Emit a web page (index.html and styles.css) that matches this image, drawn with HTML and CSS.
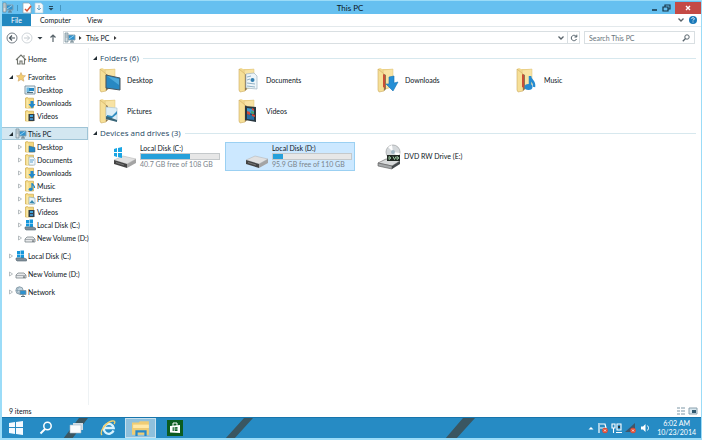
FILE: index.html
```html
<!DOCTYPE html>
<html lang="en">
<head>
<meta charset="utf-8">
<title>This PC</title>
<link rel="stylesheet" href="styles.css">
</head>
<body>
<svg class="sprite" aria-hidden="true">
  <symbol id="pc" viewBox="0 0 12 12"><path d="M1 1h3v9H1z" fill="#d4dde2" stroke="#6f8793" stroke-width=".7"/><path d="M1.500 3h2M1.500 5h2" stroke="#6f8793" stroke-width=".6"/><path d="M4.500 3h6.500v5H4.500z" fill="#2f93d0" stroke="#8aa0ac" stroke-width=".9"/><path d="M5 7l5-3.500" stroke="#8fd0f2"/><path d="M6 10h4M8 8v2" stroke="#607884"/></symbol>
  <symbol id="house" viewBox="0 0 12 12"><path d="M1 7l5-5 5 5M2.500 6v5h2.500V8h2v3h2.500V6" fill="#fff" stroke="#71746d" stroke-width="1.100"/><path d="M9 2v2" stroke="#71746d"/></symbol>
  <symbol id="star" viewBox="0 0 12 12"><path d="M6 1.500l1.300 3 3.200.3-2.400 2.200.8 3.200L6 8.500l-2.900 1.700.8-3.200-2.400-2.200 3.200-.3z" fill="#f3cd72" stroke="#cfa566" stroke-width=".6"/></symbol>
  <symbol id="desk" viewBox="0 0 12 12"><path d="M1 2h10v8H1z" fill="#e5f2fa" stroke="#8197a4"/><path d="M2.500 3.500h3v5h-3z" fill="#6fb8df"/><path d="M5 4h5v3H5z" fill="#2489c5"/><path d="M3 8.500h6" stroke="#51707f"/></symbol>
  <symbol id="fold" viewBox="0 0 12 12"><path d="M1.500 1l2-.6 1 .8h5V11h-8z" fill="#f3d77f" stroke="#cfaa4e" stroke-width=".7"/><path d="M2.500 2l2 1v9l-2-1z" fill="#fae9a9"/></symbol>
  <symbol id="f-desk" viewBox="0 0 12 12"><use href="#fold"/><path d="M5 5l6 1.500V11H5z" fill="#2487c5" stroke="#47606e" stroke-width=".5"/></symbol>
  <symbol id="f-doc" viewBox="0 0 12 12"><use href="#fold"/><path d="M5 3h4l2 2v6H5z" fill="#f3f8fb" stroke="#8ba9b9" stroke-width=".6"/><path d="M6 6h4M6 8h3" stroke="#338bc3" stroke-width=".8"/></symbol>
  <symbol id="f-down" viewBox="0 0 12 12"><use href="#fold"/><path d="M6.500 4h3v3h2L8 11.500 4.500 7h2z" fill="#2288cb"/></symbol>
  <symbol id="f-music" viewBox="0 0 12 12"><use href="#fold"/><path d="M8 9V3c0 2 3 2 2.500 5" fill="none" stroke="#2288cb" stroke-width="1.300"/><ellipse cx="6.700" cy="9.300" rx="2" ry="1.600" fill="#2288cb"/></symbol>
  <symbol id="f-pic" viewBox="0 0 12 12"><use href="#fold"/><path d="M5 4l6 1v6H5z" fill="#e8f4fa" stroke="#86a6b5" stroke-width=".6"/><path d="M5.500 10l2.500-3 3 3.500z" fill="#3587ae"/></symbol>
  <symbol id="f-vid" viewBox="0 0 12 12"><use href="#fold"/><path d="M4.500 4h6v7h-6z" fill="#303e49"/><path d="M6 5h3v2H6z" fill="#3fa4dc"/><path d="M6 8h3v2H6z" fill="#418bc0"/></symbol>
  <symbol id="osdisk" viewBox="0 0 12 12"><path d="M2 1h3v3H2zM5.500 .5H9V4H5.500zM2 4.500h3v3H2zM5.500 4.500H9V8H5.500z" fill="#1597dc"/><path d="M1 8h8l2.500 1v2H2L1 10z" fill="#82909a" stroke="#526572" stroke-width=".6"/></symbol>
  <symbol id="disk" viewBox="0 0 12 12"><path d="M1 7l2-2h6l2 2v3H1z" fill="#e6e8ea" stroke="#7c858b" stroke-width=".8"/><path d="M1 7.500h10" stroke="#8c949a" stroke-width=".7"/><path d="M8 9h2" stroke="#2d3940" stroke-width=".8"/></symbol>
  <symbol id="net" viewBox="0 0 12 12"><circle cx="4.500" cy="4.500" r="3.700" fill="#c4d5df" stroke="#758b98" stroke-width=".7"/><path d="M1 4.500h7M4.500 1c-3 2-3 5 0 7" fill="none" stroke="#7693a4" stroke-width=".6"/><path d="M5 4.500h6v4H5z" fill="#2e91ce" stroke="#78909d" stroke-width=".8"/><path d="M6 10.500h4M8 8.500v2" stroke="#5f7580"/></symbol>
  <symbol id="open" viewBox="0 0 6 6"><path d="M5 1v4H1z" fill="#222d33"/></symbol>
  <symbol id="shut" viewBox="0 0 6 6"><path d="M1.500 1l3 2-3 2z" fill="#fff" stroke="#9ba3a8" stroke-width=".7"/></symbol>
  <symbol id="down" viewBox="0 0 8 8"><path d="M1.500 2.500L4 5l2.500-2.500" fill="none" stroke="#59636a" stroke-width="1.300"/></symbol>
  <symbol id="big" viewBox="0 0 24 26"><path d="M1 2l2-1 2 1h11v18l-9 3-6 1z" fill="#f1d88f"/><path d="M6 3l10-1v17l-8 3z" fill="#f8e3a4" stroke="#dcc078" stroke-width=".5"/><path d="M1 2l6 5v17l-5 1-1-2z" fill="#f6df97" stroke="#cdab62" stroke-width=".6"/><path d="M7 7l2 1v14l-2 2z" fill="#8e7550"/></symbol>
  <symbol id="hdd" viewBox="0 0 24 26"><path d="M1 16l9-4 13 3-9 5z" fill="#e1e1e1" stroke="#b0b0b0" stroke-width=".5"/><path d="M1 16l13 4v4L1 20z" fill="#444"/><path d="M14 20l9-5v4l-9 5z" fill="#a4a4a4"/><path d="M3 18.500l8 2.500" stroke="#777"/></symbol>
</svg>
<div class="window">
  <header class="title">
    <svg class="i12"><use href="#pc"/></svg><span class="bar"></span>
    <button aria-label="Properties"><svg class="i12" viewBox="0 0 12 12"><path d="M2 1h6l2 2v8H2z" fill="#fff" stroke="#8ba0ad" stroke-width=".7"/><path d="M4 7l2 2 4-5" fill="none" stroke="#d45335" stroke-width="1.500"/></svg></button>
    <button aria-label="New folder"><svg class="i12" viewBox="0 0 12 12"><path d="M2 1h6l2 2v8H2z" fill="#f4fafd" stroke="#b2ccda" stroke-width=".7"/><path d="M6 3v5M4 6l2 2 2-2" fill="none" stroke="#6fa6c7"/></svg></button>
    <button aria-label="Customize toolbar"><svg class="i8" viewBox="0 0 8 8"><path d="M2 2h4v1H2zM1.500 4h5L4 6.500z" fill="#22475c"/></svg></button><span class="bar"></span>
    <h1>This PC</h1>
    <button aria-label="Minimize"><svg class="i12" viewBox="0 0 12 12"><path d="M4 8h5" stroke="#163447" stroke-width="1.500"/></svg></button>
    <button aria-label="Restore"><svg class="i12" viewBox="0 0 12 12"><path d="M5 5V3h5v4H8M3 5h5v4H3z" fill="none" stroke="#163447" stroke-width="1.200"/></svg></button>
    <button class="close" aria-label="Close"><svg class="i8" viewBox="0 0 8 8"><path d="M2 2l4 4M6 2L2 6" stroke="#fff" stroke-width="1.400"/></svg></button>
  </header>
  <nav class="tabs">
    <button class="file">File</button><button>Computer</button><button>View</button>
    <span class="grow"></span>
    <button aria-label="Expand ribbon"><svg class="i8"><use href="#down"/></svg></button>
    <button aria-label="Help"><svg class="i8" viewBox="0 0 8 8"><circle cx="4" cy="4" r="4" fill="#1878b8"/><path d="M2.700 3c0-2 3-1.500 2.600 0L4 4.500M4 5.500v1" fill="none" stroke="#fff" stroke-width=".9"/></svg></button>
  </nav>
  <div class="address">
    <button aria-label="Back"><svg class="i12" viewBox="0 0 12 12"><circle cx="6" cy="6" r="5" fill="#fff" stroke="#68727a" stroke-width=".9"/><path d="M9 6H3.500M6 3.500L3.500 6 6 8.500" fill="none" stroke="#46525a" stroke-width="1.200"/></svg></button>
    <button aria-label="Forward"><svg class="i12" viewBox="0 0 12 12"><circle cx="6" cy="6" r="5" fill="#fff" stroke="#c3cacf" stroke-width=".8"/><path d="M3 6h5.500M6 3.500L8.500 6 6 8.500" fill="none" stroke="#c3cacf"/></svg></button>
    <button aria-label="Recent"><svg class="i8" viewBox="0 0 8 8"><path d="M1.500 3h5L4 5.500z" fill="#333d44"/></svg></button>
    <button aria-label="Up"><svg class="i12" viewBox="0 0 12 12"><path d="M6 10V3M3.500 5.500L6 3l2.500 2.500" fill="none" stroke="#59646b" stroke-width="1.200"/></svg></button>
    <div class="crumbs">
      <svg class="i12"><use href="#pc"/></svg><svg class="i8" viewBox="0 0 8 8"><path d="M3 2l2.500 2L3 6z" fill="#333"/></svg>
      <a href="#pc">This PC</a><svg class="i8" viewBox="0 0 8 8"><path d="M3 2l2.500 2L3 6z" fill="#333"/></svg>
      <span class="grow"></span>
      <button aria-label="Previous locations"><svg class="i8"><use href="#down"/></svg></button>
      <button class="reload" aria-label="Refresh"><svg class="i8" viewBox="0 0 8 8"><path d="M6.500 3A2.700 2.700 0 1 0 6.500 5M4.500 3h2.300V.7" fill="none" stroke="#526069"/></svg></button>
    </div>
    <label class="search"><input type="text" aria-label="Search This PC" placeholder="Search This PC"><svg class="i8" viewBox="0 0 8 8"><circle cx="5" cy="3" r="2.200" fill="none" stroke="#59656d"/><path d="M3.500 4.500L.8 7.200" stroke="#59656d" stroke-width="1.300"/></svg></label>
  </div>
  <div class="body">
    <nav class="tree">
      <div class="branch"><a href="#h"><i class="tw"></i><svg class="i12"><use href="#house"/></svg>Home</a></div>
      <div class="branch">
        <a href="#f"><svg class="tw"><use href="#open"/></svg><svg class="i12"><use href="#star"/></svg>Favorites</a>
        <a class="sub" href="#d"><i class="tw"></i><svg class="i12"><use href="#desk"/></svg>Desktop</a>
        <a class="sub" href="#d"><i class="tw"></i><svg class="i12"><use href="#f-down"/></svg>Downloads</a>
        <a class="sub" href="#d"><i class="tw"></i><svg class="i12"><use href="#f-vid"/></svg>Videos</a>
      </div>
      <div class="branch">
        <a class="current" href="#p"><svg class="tw"><use href="#open"/></svg><svg class="i12"><use href="#pc"/></svg>This PC</a>
        <a class="sub" href="#d"><svg class="tw"><use href="#shut"/></svg><svg class="i12"><use href="#f-desk"/></svg>Desktop</a>
        <a class="sub" href="#d"><svg class="tw"><use href="#shut"/></svg><svg class="i12"><use href="#f-doc"/></svg>Documents</a>
        <a class="sub" href="#d"><svg class="tw"><use href="#shut"/></svg><svg class="i12"><use href="#f-down"/></svg>Downloads</a>
        <a class="sub" href="#d"><svg class="tw"><use href="#shut"/></svg><svg class="i12"><use href="#f-music"/></svg>Music</a>
        <a class="sub" href="#d"><svg class="tw"><use href="#shut"/></svg><svg class="i12"><use href="#f-pic"/></svg>Pictures</a>
        <a class="sub" href="#d"><svg class="tw"><use href="#shut"/></svg><svg class="i12"><use href="#f-vid"/></svg>Videos</a>
        <a class="sub" href="#d"><svg class="tw"><use href="#shut"/></svg><svg class="i12"><use href="#osdisk"/></svg>Local Disk (C:)</a>
        <a class="sub" href="#d"><svg class="tw"><use href="#shut"/></svg><svg class="i12"><use href="#disk"/></svg>New Volume (D:)</a>
      </div>
      <div class="branch"><a href="#c"><svg class="tw"><use href="#shut"/></svg><svg class="i12"><use href="#osdisk"/></svg>Local Disk (C:)</a></div>
      <div class="branch"><a href="#v"><svg class="tw"><use href="#shut"/></svg><svg class="i12"><use href="#disk"/></svg>New Volume (D:)</a></div>
      <div class="branch"><a href="#n"><svg class="tw"><use href="#shut"/></svg><svg class="i12"><use href="#net"/></svg>Network</a></div>
    </nav>
    <main>
      <section>
        <h2><svg class="tw"><use href="#open"/></svg>Folders (6)</h2>
        <div class="folders">
          <a href="#1"><svg class="i24" viewBox="0 0 24 26"><use href="#big"/><path d="M7 8l14 3v12L7 21z" fill="#2888c2" stroke="#485761"/><path d="M8 9l12 9v-6z" fill="#4ca9db"/></svg>Desktop</a>
          <a href="#2"><svg class="i24" viewBox="0 0 24 26"><use href="#big"/><path d="M8 7l8-1 3 3v13L8 21z" fill="#eef5f9" stroke="#9fb4c1" stroke-width=".7"/><path d="M9 10l4-1M9 13l3-1M9 16l8 1M9 19l8 1" stroke="#92b2c6"/><circle cx="14.500" cy="13" r="2" fill="#3480b1"/></svg>Documents</a>
          <a href="#3"><svg class="i24" viewBox="0 0 24 26"><use href="#big"/><path d="M6 7l2 1v13l-2-1z" fill="#c94d36"/><path d="M12 10l5-1v7l4-1-5 9-7-7h3z" fill="#268fd5" stroke="#1672b3" stroke-width=".6"/></svg>Downloads</a>
          <a href="#4"><svg class="i24" viewBox="0 0 24 26"><use href="#big"/><path d="M6 7l2 1v13l-2-1z" fill="#c94d36"/><path d="M14 21V9c0 5 5 4 4 11" fill="none" stroke="#258bd0" stroke-width="2.500"/><ellipse cx="12.500" cy="20" rx="4" ry="3" fill="#258bd0"/></svg>Music</a>
          <a href="#5"><svg class="i24" viewBox="0 0 24 26"><use href="#big"/><path d="M7 9l11 1v13L7 21z" fill="#dceef7" stroke="#b0c7d2" stroke-width=".7"/><path d="M8 17l5 1 5-5v3l-5 4-5 1z" fill="#318dc0"/><path d="M7 18l11 4v2L7 21z" fill="#396577"/></svg>Pictures</a>
          <a href="#6"><svg class="i24" viewBox="0 0 24 26"><use href="#big"/><path d="M7 8l11 1v15L7 22z" fill="#293740"/><path d="M9 10l7 1v5l-7-1z" fill="#3c9bcf"/><path d="M9 16l7 1v5l-7-1z" fill="#276fa4"/><path d="M9 13l3 1v3l-3-1zM14 16l3 1v2l-3-1zM14 10l2 1v2l-2-1z" fill="#d24836"/><path d="M13 13l3 1v2l-3-1z" fill="#49a165"/></svg>Videos</a>
        </div>
      </section>
      <section>
        <h2><svg class="tw"><use href="#open"/></svg>Devices and drives (3)</h2>
        <div class="drives">
          <a href="#c"><svg class="i24" viewBox="0 0 24 26"><use href="#hdd"/><path d="M1 5l3-1v4H1zM5 4l4-1v5H5zM1 9h3v4l-3-1zM5 9h4v5l-4-1z" fill="#19a5e4"/></svg><span class="info">Local Disk (C:)<progress value="63" max="100"></progress><small>40.7 GB free of 108 GB</small></span></a>
          <a class="picked" href="#d"><svg class="i24" viewBox="0 0 24 26"><use href="#hdd"/></svg><span class="info">Local Disk (D:)<progress value="13" max="100"></progress><small>95.9 GB free of 110 GB</small></span></a>
          <a href="#e"><svg class="i24" viewBox="0 0 24 26"><path d="M1 19l8-4 14 2-8 5z" fill="#d8dadb" stroke="#777" stroke-width=".7"/><path d="M1 19l14 3v3L1 22z" fill="#a5a8aa" stroke="#555" stroke-width=".6"/><path d="M15 22l8-5v3l-8 5z" fill="#44494c"/><circle cx="16" cy="8" r="7" fill="#d5d9dc" stroke="#9c9fa1" stroke-width=".7"/><path d="M16 8l-5-5 4-2zM16 8l5 5 2-4z" fill="#fff"/><circle cx="16" cy="8" r="2" fill="#a1b8c5"/><path d="M10 11h13v6H10z" fill="#202822"/><path d="M12 12.500v3l2-1.500zM16 12.500l1.500 3 1.500-3M20 12.500v3l2-1.500z" fill="none" stroke="#9bc4a0"/></svg><span class="info">DVD RW Drive (E:)</span></a>
        </div>
      </section>
    </main>
  </div>
  <footer class="status"><span>9 items</span><span class="grow"></span>
    <button aria-label="Details view"><svg class="i12" viewBox="0 0 12 12"><path d="M2 3h3M2 6h3M2 9h3M6 3h4M6 6h4M6 9h4" stroke="#7d96a5"/></svg></button>
    <button aria-label="Icons view"><svg class="i12" viewBox="0 0 12 12"><path d="M2 3h8v6H2z" fill="#d9e8f0" stroke="#8ba1ae"/><path d="M5 5h4v3H5z" fill="#31596f"/></svg></button>
  </footer>
</div>
<div class="taskbar">
  <svg class="stripes" width="480" height="21" viewBox="0 0 480 21" aria-hidden="true"><path d="M61 21L77 0h9L70 21zM223 21L242 0h9L232 21zM443 21L461 0h12L454 21z" fill="#3a5661"/></svg>
  <button aria-label="Start"><svg class="i16" viewBox="0 0 16 16"><path d="M1 3l6-1v5H1zM8 2l7-1v6H8zM1 8h6v6l-6-1zM8 8h7v7l-7-1z" fill="#f4faff"/></svg></button>
  <button aria-label="Search"><svg class="i16" viewBox="0 0 16 16"><circle cx="9.500" cy="6" r="3.700" fill="none" stroke="#fff" stroke-width="1.500"/><path d="M7 9l-4.500 4.500" stroke="#fff" stroke-width="2"/></svg></button>
  <button aria-label="Task view"><svg class="i16" viewBox="0 0 16 16"><path d="M4 3h10v7H4z" fill="#d2dde5"/><path d="M1 5h11v8H1z" fill="#f9fbfc" stroke="#a5bac7" stroke-width=".6"/></svg></button>
  <button aria-label="Internet Explorer"><svg class="i16" viewBox="0 0 16 16"><path d="M13.500 10.500A5 5 0 1 1 13.700 8H5" fill="none" stroke="#d8f3ff" stroke-width="2.300"/><path d="M2 15C-1 12 6 2 12 1c3-.5 3.500 1 2 3" fill="none" stroke="#f5cf68" stroke-width="1.300"/></svg></button>
  <button class="active" aria-label="File Explorer"><svg class="i18" viewBox="0 0 16 16"><path d="M0 3h6l1-1h8v12H0z" fill="#efcc74"/><path d="M1 5h14v3H1z" fill="#ffe9a8"/><path d="M3 15v-5h10v5h-2v-3H5v3z" fill="#2688cb"/></svg></button>
  <button aria-label="Store"><svg class="i16" viewBox="0 0 16 16"><path d="M0 0h16v16H0z" fill="#0b5c20"/><path d="M3 6l10-1v8L3 12.500z" fill="#fff"/><path d="M6 6V3h4v3" fill="none" stroke="#fff"/><path d="M5.500 7.500l2-.2v1.500h-2zM8 7.200l2.500-.2v1.800H8zM5.500 9.300h2v1.500l-2-.1zM8 9.300h2.500v1.800L8 11z" fill="#0b5c20"/></svg></button>
  <span class="grow"></span>
  <div class="tray">
    <svg class="i8" viewBox="0 0 8 8"><path d="M1.500 5.500L4 3l2.500 2.500z" fill="#fff"/></svg>
    <svg class="i12" viewBox="0 0 12 12"><path d="M2 11V1M3 2h5l1 4H3" fill="none" stroke="#fff" stroke-width="1.200"/><circle cx="8" cy="8.500" r="2.800" fill="#e04b35"/><path d="M7 7.500l2 2m0-2l-2 2" stroke="#fff" stroke-width=".8"/></svg>
    <svg class="i12" viewBox="0 0 12 12"><path d="M1 2h3v4H1zM2.500 6v5M6 2h4v6H6zM5 10.500h6" fill="none" stroke="#fff" stroke-width="1.100"/><path d="M7 4h2v2H7z" fill="#263a45"/></svg>
    <svg class="i12" viewBox="0 0 12 12"><path d="M0 10L10 1v9z" fill="#40566a"/><circle cx="8" cy="8.500" r="2.800" fill="#e04b35"/><path d="M7 7.500l2 2m0-2l-2 2" stroke="#fff" stroke-width=".8"/></svg>
    <svg class="i12" viewBox="0 0 12 12"><path d="M2 4.500h2L6.500 2v8L4 7.500H2z" fill="#fff"/><path d="M8 3.500c2 1 2 4 0 5" fill="none" stroke="#fff"/></svg>
  </div>
  <time>6:02 AM<br>10/23/2014</time>
</div>
</body>
</html>
```
FILE: styles.css
```css
* { box-sizing: border-box; }
body {
  margin: 0;
  min-height: 100vh;
  display: flex;
  flex-direction: column;
  background: #fff;
  border: solid #9bdcf8;
  border-width: 1px 1px 2px 2px;
  font: 7px/10px Lato, "Open Sans", sans-serif;
  color: #0c161c;
}
button {
  display: flex;
  align-items: center;
  justify-content: center;
  padding: 0;
  border: 0;
  background: none;
  font: inherit;
  color: inherit;
}
a { color: inherit; text-decoration: none; white-space: nowrap; }
svg { display: block; flex: none; }
.sprite { position: absolute; width: 0; height: 0; }
.i8 { width: 8px; height: 8px; }
.i12 { width: 12px; height: 12px; }
.i16 { width: 16px; height: 16px; }
.i18 { width: 18px; height: 18px; }
.i24 { width: 24px; height: 26px; }
.tw { width: 6px; height: 6px; flex: none; }
.grow { flex: 1; }
.window { flex: 1; display: flex; flex-direction: column; }

.title { display: flex; align-items: center; height: 13px; background: #66c0f0; }
.title > button { height: 12px; min-width: 12px; }
.title .bar { width: 1px; height: 6px; margin: 0 3px; background: #4697c2; }
.title h1 { flex: 1; margin: 0; padding-right: 12px; font: 8px/12px Lato, "Open Sans", sans-serif; text-align: center; }
.title .close { width: 26px; margin-left: 3px; background: #c44a45; }

.tabs { display: flex; height: 13px; border-bottom: 1px solid #e3e9ec; padding-right: 2px; }
.tabs > button { min-width: 12px; }
.tabs .file { width: 29px; margin-right: 9px; background: #2088c0; color: #fff; }
.tabs .file + button { margin-right: 16px; }

.address { display: flex; align-items: center; gap: 4px; height: 21px; padding: 0 6px 0 4px; }
.address > button + button { margin-left: -1px; }
.crumbs {
  flex: 1;
  display: flex;
  align-items: center;
  height: 13px;
  border: 1px solid #d9dfe2;
}
.crumbs a { padding: 0 2px; }
.crumbs button { width: 12px; height: 12px; }
.crumbs .reload { border-left: 1px solid #d9dfe2; }
.search { display: flex; align-items: center; width: 111px; height: 13px; padding: 0 4px; border: 1px solid #d9dfe2; }
.search input { flex: 1; min-width: 0; padding: 0; border: 0; outline: 0; background: none; font: inherit; }
.search input::placeholder { color: #68747b; }

.body { flex: 1; display: flex; }
.tree { width: 87px; padding-top: 4px; border-right: 1px solid #eef2f4; display: flex; flex-direction: column; gap: 5px; }
.tree a { display: flex; align-items: center; height: 13px; padding-left: 6px; gap: 1px; }
.tree .sub { padding-left: 15px; }
.tree .current { background: #d3e7f1; border: 1px solid #9fc4d6; border-left: 0; }

main { flex: 1; padding: 4px 5px 0 3px; }
h2 { display: flex; align-items: center; gap: 2px; height: 12px; margin: 0; font: 8px/12px "Open Sans", sans-serif; color: #1d4864; white-space: nowrap; }
h2::after { content: ""; flex: 1; height: 1px; margin-left: 2px; background: #d7e8ee; }
.folders { display: grid; grid-template-columns: repeat(auto-fill, 139px); gap: 5px 0; padding: 3px 0 3px 7px; }
.folders a { display: flex; align-items: center; gap: 4px; }
.drives { display: flex; flex-wrap: wrap; gap: 2px; padding: 3px 0 0 1px; }
.drives a { display: flex; align-items: center; gap: 3px; width: 130px; height: 29px; padding: 0 2px 0 19px; border: 1px solid transparent; }
.drives .picked { background: #cce8ff; border-color: #9bd0f2; }
.info { flex: 1; display: flex; flex-direction: column; line-height: 9px; }
small { font-size: 7px; color: #7a838a; }
progress { appearance: none; display: block; width: 100%; height: 7px; border: 1px solid #c5c9cb; background: #e7e7e7; }
progress::-webkit-progress-bar { background: #e7e7e7; }
progress::-webkit-progress-value { background: #26a0da; }

.status { display: flex; align-items: center; height: 12px; padding: 0 2px 0 7px; }

.taskbar { position: relative; display: flex; align-items: center; height: 21px; padding: 0 5px; background: #268bc4; border-top: 1px solid #1775ac; color: #fff; overflow: hidden; }
.stripes { position: absolute; left: 0; top: 0; }
.taskbar button { position: relative; width: 31px; height: 20px; }
.taskbar button:first-of-type { width: 17px; margin-right: 6px; }
.taskbar .active { margin: 0 3px 0 2px; background: #8fc0dc; border: 1px solid #c6e0ee; }
.tray { display: flex; align-items: center; gap: 2px; margin-right: 6px; }
time { line-height: 9px; text-align: center; }
```
